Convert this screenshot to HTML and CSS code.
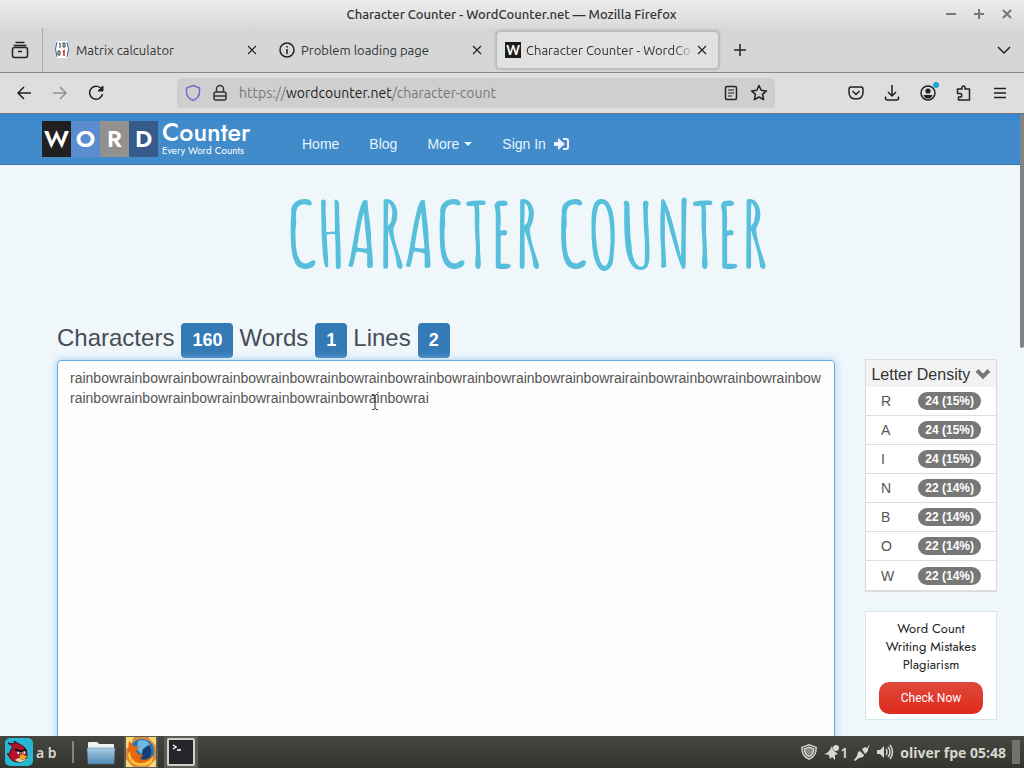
FILE: index.html
```html
<!DOCTYPE html>
<html lang="en">
<head>
<meta charset="utf-8">
<title>Character Counter - WordCounter.net</title>
<link rel="stylesheet" href="styles.css">
</head>
<body>
<div class="titlebar">
  <span class="window-title">Character Counter - WordCounter.net — Mozilla Firefox</span>
  <div class="window-controls">
    <button aria-label="Minimize"><svg width="12" height="12" viewBox="0 0 12 12"><path d="M1 6h10"/></svg></button>
    <button aria-label="Maximize"><svg width="12" height="12" viewBox="0 0 12 12"><path d="M1 6h10M6 1v10"/></svg></button>
    <button aria-label="Close"><svg width="12" height="12" viewBox="0 0 12 12"><path d="M2 2l8 8M10 2l-8 8"/></svg></button>
  </div>
</div>
<div class="tabbar">
  <button class="view-button" aria-label="Firefox View"><svg width="18" height="18" viewBox="0 0 18 18"><path d="M4.500 1.500h9M2.500 4.500h13M1.500 8.500a2 2 0 0 1 2-2h11a2 2 0 0 1 2 2v6a2 2 0 0 1-2 2h-11a2 2 0 0 1-2-2zM7 10.500h4"/></svg></button>
  <div class="tab">
    <svg class="favicon" width="16" height="18" viewBox="0 0 16 18"><rect x="2" width="12" height="17" fill="#fff" stroke="none"/><path stroke="#369" stroke-width="1" d="M3 1Q0 8 3 16M13 1q3 7 0 15"/><path stroke="#333" stroke-width="1" d="M5 3l1-1v5M9 2h2v4H9zM4 10h2v4H4z"/><path stroke="#c22" stroke-width="1.500" d="M9 11l1-1v5"/></svg>
    <span class="tab-label">Matrix calculator</span>
    <button class="tab-close" aria-label="Close tab"><svg width="10" height="10" viewBox="0 0 10 10"><path d="M1 1l8 8M9 1l-8 8"/></svg></button>
  </div>
  <div class="tab">
    <svg class="favicon" width="16" height="16" viewBox="0 0 16 16"><circle cx="8" cy="8" r="7"/><path d="M8 7v5M8 4v1.500"/></svg>
    <span class="tab-label">Problem loading page</span>
    <button class="tab-close" aria-label="Close tab"><svg width="10" height="10" viewBox="0 0 10 10"><path d="M1 1l8 8M9 1l-8 8"/></svg></button>
  </div>
  <div class="tab active">
    <span class="w-icon">W</span>
    <span class="tab-label">Character Counter - WordCo</span>
    <button class="tab-close" aria-label="Close tab"><svg width="10" height="10" viewBox="0 0 10 10"><path d="M1 1l8 8M9 1l-8 8"/></svg></button>
  </div>
  <button class="new-tab" aria-label="New tab"><svg width="14" height="14" viewBox="0 0 14 14"><path d="M1 7h12M7 1v12"/></svg></button>
  <button class="list-tabs" aria-label="List all tabs"><svg width="14" height="10" viewBox="0 0 14 10"><path d="M1 2l6 6 6-6"/></svg></button>
</div>
<div class="toolbar">
  <button aria-label="Back"><svg width="16" height="16" viewBox="0 0 16 16"><path d="M15 8H2M8 2L2 8l6 6"/></svg></button>
  <button class="disabled" aria-label="Forward"><svg width="16" height="16" viewBox="0 0 16 16"><path d="M1 8h13M8 2l6 6-6 6"/></svg></button>
  <button aria-label="Reload"><svg width="16" height="16" viewBox="0 0 16 16"><path d="M14 5A6.500 6.500 0 1 0 14.500 9"/><path d="M15 1v5h-5z" fill="#222" stroke-width="1"/></svg></button>
  <div class="urlbar">
    <svg width="16" height="18" viewBox="0 0 16 18"><path stroke="#7b68cc" d="M8 1.500L14.500 4v4c0 4-3 7-6.500 8.500C4.500 15 1.500 12 1.500 8V4z"/></svg>
    <svg width="14" height="18" viewBox="0 0 14 18"><path stroke="#333" d="M3.500 8V5a3.500 3.500 0 0 1 7 0v3M3 8h8q2 0 2 2v4q0 2-2 2H3q-2 0-2-2v-4q0-2 2-2zM1 12h12"/></svg>
    <a class="address" href="#">https://<b>wordcounter.net</b>/character-count</a>
    <button aria-label="Reader view"><svg width="14" height="16" viewBox="0 0 14 16"><rect x="1.500" y="1.500" width="11" height="13" rx="1.500"/><path stroke-width="1.200" d="M4 5h6M4 8h6M4 11h4"/></svg></button>
    <button aria-label="Bookmark"><svg width="18" height="18" viewBox="0 0 18 18"><path stroke-linejoin="round" d="M9 1.500l2.200 4.800 5.200.6-3.900 3.500 1.100 5.200L9 13l-4.600 2.600 1.100-5.200L1.600 6.900l5.200-.6z"/></svg></button>
  </div>
  <div class="tools">
    <button aria-label="Pocket"><svg width="16" height="16" viewBox="0 0 16 16"><path d="M3 2h10q2 0 2 2v3q0 7-7 7T1 7V4q0-2 2-2zM4.500 6L8 9.500 11.500 6"/></svg></button>
    <button aria-label="Downloads"><svg width="16" height="16" viewBox="0 0 16 16"><path d="M8 0v11M4 7l4 4 4-4M1.500 11.500V13q0 2 2 2h9q2 0 2-2v-1.500"/></svg></button>
    <button class="account" aria-label="Account"><svg width="16" height="16" viewBox="0 0 16 16"><circle cx="8" cy="8" r="7"/><circle cx="8" cy="6" r="2.600" fill="#222" stroke="none"/><path fill="#222" stroke="none" d="M3.500 10h9q-1 3.500-4.500 3.500T3.500 10z"/></svg><span class="notice"></span></button>
    <button aria-label="Extensions"><svg width="16" height="16" viewBox="0 0 16 16"><path stroke-linejoin="round" d="M6 4V2.500a1.500 1.500 0 0 1 3 0V4h4.500v11h-11V12H4a1.800 1.800 0 0 0 0-3.600H1.500V4z"/></svg></button>
    <button aria-label="Menu"><svg width="14" height="14" viewBox="0 0 14 14"><path d="M1 2.500h12M1 7h12M1 11.500h12"/></svg></button>
  </div>
</div>
<div class="viewport">
  <div class="scroll-thumb"></div>
  <nav class="navbar">
    <a class="logo" href="#" aria-label="Word Counter">
      <span class="tile black">W</span><span class="tile blue">O</span><span class="tile gray">R</span><span class="tile navy">D</span>
      <span class="brand"><span class="brand-name">Counter</span><span class="brand-line">Every Word Counts</span></span>
    </a>
    <a class="nav-link" href="#">Home</a>
    <a class="nav-link" href="#">Blog</a>
    <a class="nav-link" href="#">More <span class="caret"></span></a>
    <a class="nav-link" href="#">Sign In <svg width="15" height="12" viewBox="0 0 15 12"><path fill="#eef" d="M0 4h4V0l7 6-7 6V8H0z"/><path fill="none" stroke="#eef" stroke-width="2" d="M9 1h3q2 0 2 2v6q0 2-2 2H9"/></svg></a>
  </nav>
  <main class="page">
    <h1 class="headline">CHARACTER COUNTER</h1>
    <div class="columns">
      <section class="editor">
        <h2 class="stats"><span>Characters</span><span class="count">160</span><span>Words</span><span class="count">1</span><span>Lines</span><span class="count">2</span></h2>
        <div class="text-wrap">
          <textarea class="text-box" rows="22" spellcheck="false" aria-label="Text to count">rainbowrainbowrainbowrainbowrainbowrainbowrainbowrainbowrainbowrainbowrainbowrairainbowrainbowrainbowrainbow
rainbowrainbowrainbowrainbowrainbowrainbowrainbowrai</textarea>
          <svg class="pointer" width="8" height="18" viewBox="0 0 8 18"><path fill="none" stroke="#333" d="M1 1.500h2l1 1 1-1h2M4 2v14M1 16.500h2l1-1 1 1h2"/></svg>
        </div>
      </section>
      <aside class="sidebar">
        <table class="density">
          <colgroup><col class="letter-col"><col></colgroup>
          <thead><tr><th colspan="2">Letter Density <svg width="16" height="12" viewBox="0 0 16 12"><path fill="none" stroke="#777" stroke-width="4" d="M2 2.500l6 6 6-6"/></svg></th></tr></thead>
          <tbody>
            <tr><td>R</td><td><span class="badge">24 (15%)</span></td></tr>
            <tr><td>A</td><td><span class="badge">24 (15%)</span></td></tr>
            <tr><td>I</td><td><span class="badge">24 (15%)</span></td></tr>
            <tr><td>N</td><td><span class="badge">22 (14%)</span></td></tr>
            <tr><td>B</td><td><span class="badge">22 (14%)</span></td></tr>
            <tr><td>O</td><td><span class="badge">22 (14%)</span></td></tr>
            <tr><td>W</td><td><span class="badge">22 (14%)</span></td></tr>
          </tbody>
        </table>
        <div class="promo">
          <p>Word Count<br>Writing Mistakes<br>Plagiarism</p>
          <button>Check Now</button>
        </div>
      </aside>
    </div>
  </main>
</div>
<footer class="taskbar">
  <button class="start"><svg width="28" height="28" viewBox="0 0 28 28"><rect width="28" height="28" rx="5" fill="#25b7d3"/><path fill="#b3132b" stroke="#3a1018" d="M8 9L3 5l7 1-1-3 5 3q8 3 8 10 0 8-8 8-8 0-10-6l-2-2 3-1q0-4 3-6z"/><path fill="#e8cfae" d="M10 22q5-4 11-1-2 3-6 3-3 0-5-2z"/><circle cx="14" cy="14.500" r="1.800" fill="#fff"/><circle cx="18.500" cy="14.500" r="1.800" fill="#fff"/><circle cx="14.500" cy="15" r=".8" fill="#111"/><circle cx="18" cy="15" r=".8" fill="#111"/><path stroke="#111" stroke-width="2" d="M10 11.500l6 2 5-2"/><path fill="#f5ad22" stroke="#7a4510" stroke-width=".5" d="M14 18l3-2 6 3-6 3z"/></svg>a b</button>
  <span class="divider"></span>
  <div class="launchers">
    <button aria-label="Files"><svg width="30" height="26" viewBox="0 0 30 26"><defs><linearGradient id="folder" x2="0" y2="1"><stop stop-color="#a9cce4"/><stop offset="1" stop-color="#4f8bb5"/></linearGradient></defs><path fill="#eef2f4" d="M2 4q0-1 1-1h8q1 0 2 2h14q1 0 1 1v5H2z"/><path fill="url(#folder)" stroke="#537b98" stroke-width=".5" d="M1 9h28l-1 15q0 1-1 1H3q-1 0-1-1z"/></svg></button>
    <button class="running" aria-label="Firefox"><svg width="30" height="30" viewBox="0 0 30 30"><rect width="30" height="30" fill="#d98a3c"/><path fill="#f7d978" d="M0 0h8l-4 9-4 3zM22 0h8v9zM0 22l7 8H0zM30 22v8h-8z"/><circle cx="16" cy="14" r="12" fill="#2277b8"/><path fill="#70b9dc" d="M12 4q8-3 12 4l-5 2 2 5-5 3-5-6z"/><path fill="#173e78" d="M17 12l6-4q5 8-1 14-4 3-8 1z"/><path fill="#e66612" d="M3 4l5 5 5 1-3 4 2 3 5 1-3 4q8 3 14-5Q25 29 14 28 1 26 2 13z"/><path fill="#ffc536" d="M4 14q0 10 9 12 9 1 14-7 0 9-10 10Q3 29 2 17z"/></svg></button>
    <button class="running" aria-label="Terminal"><svg width="28" height="28" viewBox="0 0 28 28"><rect x="1" y="1" width="26" height="26" rx="1" fill="#242629" stroke="#d0d0ce" stroke-width="2"/><path fill="none" stroke="#fff" stroke-width="1.500" d="M6 7l3 2-3 2M10 12h4"/></svg></button>
  </div>
  <div class="tray">
    <svg width="18" height="18" viewBox="0 0 18 18"><path fill="#d8d8d0" d="M9 1l8 3q0 10-8 13Q1 14 1 4z"/><path fill="none" stroke="#44443f" d="M9 3l6 2q0 7-6 10Q3 12 3 5z"/><path fill="#8b8b84" d="M9 5l4 1q0 5-4 7-4-2-4-7z"/></svg>
    <span class="updates"><svg width="16" height="18" viewBox="0 0 16 18"><path fill="#d8d8d0" d="M0 11q5-1 8-8l1 4 5 4-3 1v5l-3-3-2 2-1-4z"/><circle cx="12" cy="5" r="3" fill="#d8d8d0"/></svg>1</span>
    <svg width="16" height="18" viewBox="0 0 16 18"><path fill="#d8d8d0" d="M0 17l3-4 1-4 2-1 4 4-1 2-4 1-4 3zM8 6l3-2 2 1 3-4-2 5 0 2-3 3z"/></svg>
    <svg width="18" height="16" viewBox="0 0 18 16"><path fill="#d8d8d0" d="M1 6h3l4-4v12l-4-4H1z"/><path fill="none" stroke="#d8d8d0" stroke-width="1.500" d="M10 5q2 3 0 6M12 3q4 5 0 10M14 1q5 7 0 14"/></svg>
    <span class="clock">oliver fpe 05:48</span>
    <span class="show-desktop"></span>
  </div>
</footer>
</body>
</html>
```
FILE: styles.css
```css
* { box-sizing: border-box; }
body {
  margin: 0;
  height: 100vh;
  display: flex;
  flex-direction: column;
  overflow: hidden;
  background: #dcdcdc;
  color: #333;
  font-family: Ubuntu, "Noto Sans", sans-serif;
  font-size: 13px;
}
button {
  border: 0;
  padding: 0;
  background: none;
  color: inherit;
  font: inherit;
  display: inline-flex;
  align-items: center;
  justify-content: center;
}
a { color: inherit; text-decoration: none; }
svg { flex: none; }

/* browser chrome */
.titlebar, .tabbar, .toolbar { flex: none; display: flex; align-items: center; }
.titlebar svg, .tabbar svg, .toolbar svg { fill: none; stroke: #222; stroke-width: 1.5; }
.titlebar {
  height: 28px;
  padding: 0 11px 0 78px;
  background: linear-gradient(#ececec, #dadada);
}
.window-title { flex: 1; text-align: center; color: #333; font-size: 13px; font-weight: 500; }
.window-controls { display: flex; gap: 16px; }
.titlebar .window-controls svg { stroke: #777; stroke-width: 2; }
.window-controls button { width: 12px; }
.tabbar {
  height: 45px;
  background: #d6d6d6;
  border-bottom: 1px solid #888;
}
.view-button { width: 43px; height: 44px; padding-right: 3px; border-right: 1px solid #aaa; }
.tab {
  width: 225px;
  height: 38px;
  flex: 0 1 225px;
  display: flex;
  align-items: center;
  gap: 6px;
  padding: 0 9px 0 11px;
  min-width: 0;
}
.tab.active {
  background: #e1e1e1;
  border: 1px solid #bbb;
  border-radius: 4px;
  box-shadow: 0 0 3px #999;
  padding: 0 10px 0 8px;
  gap: 5px;
  flex-basis: 223px;
  margin-left: 3px;
}
.tab-label { flex: 1; overflow: hidden; white-space: nowrap; }
.active .tab-label { mask-image: linear-gradient(90deg, #000 88%, transparent); }
.tab-close { width: 14px; height: 20px; }
.active .tab-close { width: 12px; margin-left: -3px; }
.tabbar .tab-close svg { stroke-width: 1.2; }
.w-icon {
  width: 16px;
  background: #1c1c1c;
  color: #fff;
  font: bold 13px/16px Lato, sans-serif;
  text-align: center;
}
.new-tab { width: 42px; height: 32px; }
.list-tabs { width: 40px; height: 32px; margin-left: auto; }
.toolbar { height: 41px; padding: 0 16px; gap: 20px; background: #dedede; border-bottom: 1px solid #777; }
.toolbar > button { width: 16px; height: 32px; }
.toolbar .disabled { opacity: .4; }
.urlbar {
  flex: 1;
  height: 30px;
  margin-left: 53px;
  padding: 0 7px 0 8px;
  display: flex;
  align-items: center;
  gap: 12px;
  background: #cfcfcf;
  border-radius: 4px;
}
.address { flex: 1; color: #777; font-size: 14px; white-space: nowrap; }
.address b { color: #222; font-weight: 400; }
.tools { display: flex; gap: 20px; margin-left: 53px; }
.tools button { width: 16px; height: 32px; }
.account { position: relative; }
.notice { position: absolute; top: 5px; right: -3px; width: 6px; height: 6px; border-radius: 50%; background: #18a5dc; }

/* web page */
.viewport {
  flex: 1;
  min-height: 0;
  position: relative;
  overflow: hidden;
  background: #f0f7fb;
  font-family: "Liberation Sans", Arial, sans-serif;
  font-size: 14px;
}
.scroll-thumb { position: absolute; top: 0; right: 0; width: 4px; height: 234px; border-radius: 2px; background: #808388; }
.navbar {
  height: 51px;
  padding-left: 42px;
  display: flex;
  align-items: center;
  background: linear-gradient(#3488d2, #428bca 12px);
  border-bottom: 1px solid #3276a8;
  color: #e6f4ff;
}
.logo { display: flex; align-items: center; color: #fff; font-family: Jost, Lato, sans-serif; width: 245px; }
.tile { width: 29px; height: 36px; font-size: 24px; font-weight: 600; line-height: 36px; text-align: center; }
.black { background: #211f20; }
.blue { background: #5b8ccd; }
.gray { background: #92918f; }
.navy { background: #365b89; }
.brand { display: flex; flex-direction: column; margin-left: 4px; }
.brand-name { font-size: 25px; line-height: 24px; font-weight: 500; }
.brand-line { font-size: 10px; line-height: 14px; white-space: nowrap; }
.nav-link { padding: 10px 15px 0; line-height: 20px; height: 40px; display: flex; align-items: center; gap: 8px; white-space: nowrap; }
.caret { border: 4px solid transparent; border-top-color: currentColor; border-bottom: 0; margin-left: -3px; }
.page { padding: 0 27px 0 57px; }
.headline {
  margin: 0;
  padding-top: 19px;
  height: 152px;
  color: #57bfdb;
  font-family: "Amatic SC", sans-serif;
  font-size: 90px;
  font-weight: 700;
  line-height: 100px;
  text-align: center;
  white-space: nowrap;
}
.columns { display: grid; grid-template-columns: minmax(0, 1fr) 132px; gap: 30px; }
.stats {
  margin: 0;
  height: 43px;
  padding: 6px 0 2px;
  display: flex;
  gap: 7px;
  color: #474c58;
  font-size: 24px;
  font-weight: 400;
  line-height: 30px;
}
.count {
  padding: 0 11px;
  border-radius: 4px;
  background: #337ab7;
  color: #fff;
  font-size: 18px;
  font-weight: 700;
  line-height: 35px;
}
.count + span { margin-left: -1px; }
.text-wrap { position: relative; }
.text-box {
  display: block;
  width: 100%;
  padding: 7px 12px;
  border: 1px solid #66afe9;
  border-radius: 4px;
  box-shadow: 0 0 8px #9fcdee;
  background: #fdfdfd;
  color: #555;
  font: 14px/20px "Liberation Sans", Arial, sans-serif;
  overflow: hidden;
  resize: none;
}
.pointer { position: absolute; left: 314px; top: 33px; }
.sidebar { padding-top: 42px; }
.density {
  width: 100%;
  border: 1px solid #ddd;
  border-spacing: 0;
  background: #fff;
  box-shadow: 0 1px 1px #ddd;
  table-layout: fixed;
}
.letter-col { width: 40px; }
.density th { height: 27px; padding: 2px 0 0; background: #f2f2f2; font-size: 16px; font-weight: 400; white-space: nowrap; }
.density td { height: 29px; padding: 0 0 0 15px; border-bottom: 1px solid #ddd; color: #555; }
.density td:last-child { padding: 0 15px 0 0; text-align: right; }
.density tr:last-child td { border-bottom: 0; }
.badge {
  display: inline-block;
  padding: 3px 7px;
  border-radius: 10px;
  background: #777;
  color: #fff;
  font-size: 12px;
  font-weight: 700;
  line-height: 12px;
  vertical-align: middle;
  white-space: nowrap;
}
.promo {
  margin-top: 20px;
  padding: 8px 13px 5px;
  border: 1px solid #d5e8e8;
  background: #fff;
  color: #222;
  font-family: Jost, Lato, sans-serif;
  font-size: 13px;
  text-align: center;
}
.promo p { margin: 0 0 8px; line-height: 18px; white-space: nowrap; }
.promo button {
  width: 100%;
  height: 32px;
  border-radius: 10px;
  background: linear-gradient(#dd4a3b, #e02a1c);
  color: #fff;
  font-family: Roboto, sans-serif;
  font-size: 12px;
}

/* desktop panel */
.taskbar {
  flex: none;
  height: 32px;
  padding: 0 4px 0 5px;
  display: flex;
  align-items: center;
  background: linear-gradient(#464740, #34352f);
  color: #d8d8d0;
  font-family: "Noto Sans", sans-serif;
  font-size: 14px;
  font-weight: 600;
}
.start { gap: 3px; }
.start svg { fill: none; }
.divider { width: 2px; height: 22px; margin: 0 10px 0 15px; background: #85857c; }
.launchers { display: flex; gap: 6px; }
.launchers button { width: 34px; height: 32px; }
.running { background: #5a5b54; }
.tray { margin-left: auto; display: flex; align-items: center; gap: 6px; }
.clock { font-family: "Open Sans", sans-serif; font-weight: 700; }
.updates { display: flex; align-items: center; }
.show-desktop { width: 8px; height: 24px; background: #73736c; }
```
